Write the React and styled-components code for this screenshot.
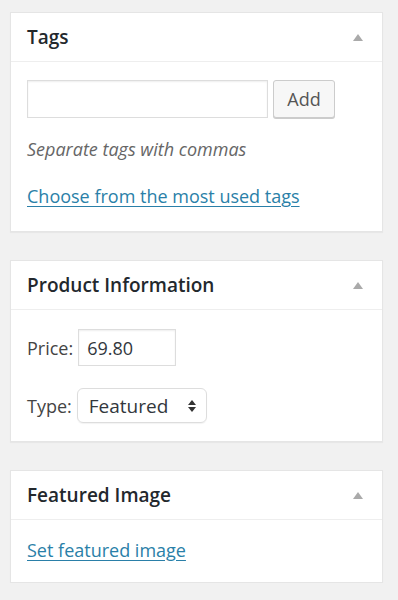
import React from "react";
import styled, { createGlobalStyle } from "styled-components";

const Global = createGlobalStyle`
  html, body { margin: 0; padding: 0; background: #f1f1f1; }
  body { font-family: "Open Sans", "Noto Sans", sans-serif; color: #444; }
  #root { padding: 12px 15px 0 10px; }
`;

const Stack = styled.div`
  display: flex;
  flex-direction: column;
  gap: 28px;
`;

const Box = styled.section`
  background: #fff;
  border: 1px solid #e5e5e5;
  box-shadow: 0 1px 1px rgba(0, 0, 0, 0.04);
`;

const Header = styled.div`
  height: 48px;
  border-bottom: 1px solid #eeeeee;
  display: flex;
  align-items: center;
  justify-content: space-between;
  padding: 0 19px 0 16px;
`;

const Title = styled.h2`
  margin: 0;
  font-size: 19px;
  font-weight: 600;
  color: #23282d;
`;

const Caret = styled.span`
  width: 0;
  height: 0;
  border-left: 5.5px solid transparent;
  border-right: 5.5px solid transparent;
  border-bottom: 7px solid #aaa;
`;

const Body = styled.div`
  padding: ${(p) => p.$pad || "18px 16px 20px"};
`;

const Row = styled.div`
  display: flex;
  align-items: center;
  gap: ${(p) => p.$gap || "5px"};
  margin-bottom: ${(p) => p.$mb || "0"};
`;

const TextInput = styled.input`
  box-sizing: border-box;
  width: ${(p) => p.$w};
  height: ${(p) => p.$h || "38px"};
  border: 1px solid #ddd;
  box-shadow: inset 0 1px 2px rgba(0, 0, 0, 0.07);
  font-family: inherit;
  font-size: 18px;
  color: #32373c;
  padding: 0 8px;
  margin: 0;
  outline: none;
`;

const Button = styled.button`
  box-sizing: border-box;
  width: 62px;
  height: 38px;
  background: #f7f7f7;
  border: 1px solid #cccccc;
  border-radius: 3px;
  box-shadow: 0 1px 0 #ccc;
  font-family: inherit;
  font-size: 18px;
  color: #555;
  margin: 0;
  padding: 0;
`;

const Hint = styled.p`
  margin: 19px 0 0;
  font-size: 18px;
  font-style: italic;
  color: #666;
`;

const Link = styled.a`
  display: inline-block;
  font-size: 18px;
  color: #2a7fa8;
  text-decoration: underline;
  text-underline-offset: 3px;
  margin-top: ${(p) => p.$mt || "0"};
`;

const Label = styled.label`
  font-size: 18px;
  color: #444;
`;

const Select = styled.div`
  box-sizing: border-box;
  width: 130px;
  height: 35px;
  border: 1px solid #ddd;
  border-radius: 6px;
  display: flex;
  align-items: center;
  justify-content: space-between;
  padding: 0 10px 0 11px;
  font-size: 19px;
  color: #32373c;
  box-shadow: 0 1px 1px rgba(0, 0, 0, 0.05);
`;

const Arrows = styled.span`
  display: flex;
  flex-direction: column;
  gap: 2px;
  &::before, &::after {
    content: "";
    width: 0;
    height: 0;
    border-left: 4px solid transparent;
    border-right: 4px solid transparent;
  }
  &::before { border-bottom: 5px solid #333; }
  &::after { border-top: 5px solid #333; }
`;

export default function App() {
  return (
    <>
      <Global />
      <Stack>
        <Box>
          <Header>
            <Title>Tags</Title>
            <Caret />
          </Header>
          <Body $pad="18px 16px 23px">
            <Row>
              <TextInput $w="241px" />
              <Button>Add</Button>
            </Row>
            <Hint>Separate tags with commas</Hint>
            <Link href="#" $mt="23px">Choose from the most used tags</Link>
          </Body>
        </Box>
        <Box>
          <Header>
            <Title>Product Information</Title>
            <Caret />
          </Header>
          <Body $pad="19px 16px 18px">
            <Row $mb="22px">
              <Label>Price:</Label>
              <TextInput $w="98px" $h="37px" defaultValue="69.80" />
            </Row>
            <Row>
              <Label>Type:</Label>
              <Select>
                <span>Featured</span>
                <Arrows />
              </Select>
            </Row>
          </Body>
        </Box>
        <Box>
          <Header>
            <Title>Featured Image</Title>
            <Caret />
          </Header>
          <Body $pad="18px 16px 20px">
            <Link href="#">Set featured image</Link>
          </Body>
        </Box>
      </Stack>
    </>
  );
}
